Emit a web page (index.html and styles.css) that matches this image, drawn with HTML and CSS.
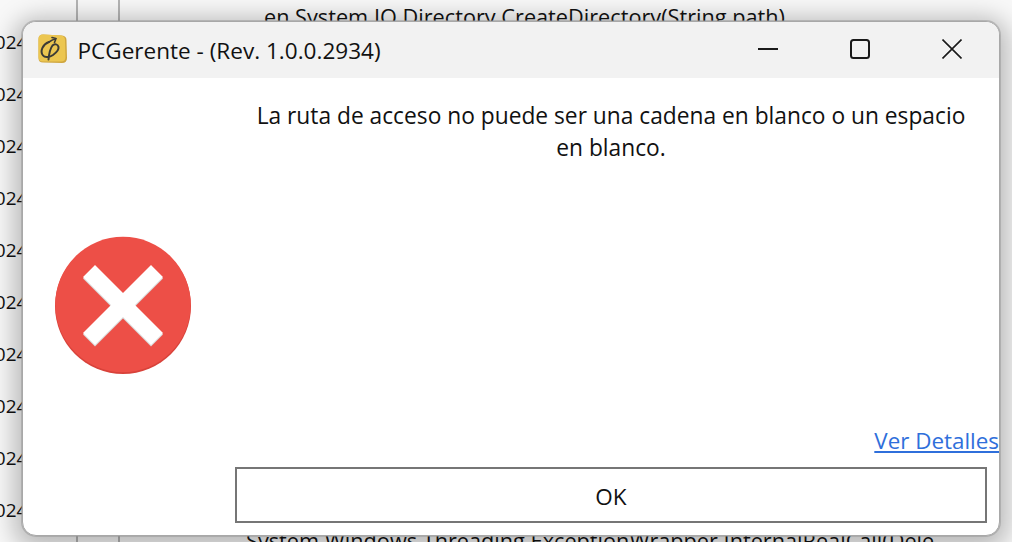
FILE: index.html
```html
<!DOCTYPE html>
<html lang="es">
<head>
<meta charset="utf-8">
<title>PCGerente</title>
<link rel="stylesheet" href="styles.css">
</head>
<body>
<div class="backdrop">
  <div class="col-dates">
    <span>2024</span><span>2024</span><span>2024</span><span>2024</span><span>2024</span><span>2024</span><span>2024</span><span>2024</span><span>2024</span><span>2024</span>
  </div>
  <div class="col-narrow"></div>
  <div class="col-log">
    <div class="log-top">en System.IO.Directory.CreateDirectory(String path)</div>
    <div class="log-bottom">System.Windows.Threading.ExceptionWrapper.InternalRealCall(Dele</div>
  </div>
</div>
<section class="dialog">
  <header class="titlebar">
    <svg class="app-icon" width="29" height="30" viewBox="0 0 29 30">
      <path d="M5 0.500 L24 1.500 Q28.500 2 28.500 6 L29 24 Q29 29 24 29 L5 28.500 Q0.500 28.500 0.500 24 L0.500 5 Q0.500 0.500 5 0.500z" fill="#cfa63f"/>
      <path d="M5 0.500 L23 1.500 Q27 2 27 6 L27.500 23 Q27.500 27.500 23 27.500 L5 27.500 Q0.500 27.500 0.500 23 L0.500 5 Q0.500 0.500 5 0.500z" fill="#ecc650"/>
      <path d="M11 8C5 10 1.500 17 5 21.500c2 2.500 7 1.500 10-.5 3.500-2.500 6-5 5.500-8-.5-3-4-3.500-6-1.500-2 2.500-3.500 9-4 14" fill="none" stroke="#3c3b36" stroke-width="2" stroke-linecap="round"/>
      <path d="M11 8C13 6.500 15 5.500 18 4.500M14 3.500l4 1-1.500 4" fill="none" stroke="#3c3b36" stroke-width="1.600" stroke-linecap="round"/>
    </svg>
    <h1 class="title">PCGerente - (Rev. 1.0.0.2934)</h1>
    <div class="win-controls">
      <svg class="ctl" width="20" height="20" viewBox="0 0 20 20"><path d="M0 10h20" stroke="#1a1a1a" stroke-width="2" fill="none"/></svg>
      <svg class="ctl" width="20" height="20" viewBox="0 0 20 20"><rect x="1" y="1" width="18" height="18" rx="2.500" stroke="#1a1a1a" stroke-width="2" fill="none"/></svg>
      <svg class="ctl" width="20" height="20" viewBox="0 0 20 20"><path d="M0.500 0.500l19 19M19.500 0.500l-19 19" stroke="#1a1a1a" stroke-width="1.600" fill="none"/></svg>
    </div>
  </header>
  <div class="content">
    <div class="icon-pane">
      <svg width="138" height="140" viewBox="0 0 138 140">
        <circle cx="68" cy="70" r="68" fill="#d8423a"/>
        <circle cx="68" cy="68.500" r="67.700" fill="#ed4f47"/>
        <g transform="translate(68 70.500)">
          <polygon points="-28,-40 0,-12 28,-40 40,-28 12,0 40,28 28,40 0,12 -28,40 -40,28 -12,0 -40,-28" fill="#d9d9d9"/>
        </g>
        <g transform="translate(68 69)">
          <polygon points="-28,-40 0,-12 28,-40 40,-28 12,0 40,28 28,40 0,12 -28,40 -40,28 -12,0 -40,-28" fill="#ffffff"/>
        </g>
      </svg>
    </div>
    <div class="main-pane">
      <p class="message">La ruta de acceso no puede ser una cadena en blanco o un espacio en blanco.</p>
      <a class="details" href="#">Ver Detalles</a>
      <button class="ok" type="button">OK</button>
    </div>
  </div>
</section>
</body>
</html>
```
FILE: styles.css
```css
* { box-sizing: border-box; }
html, body { margin: 0; height: 100%; overflow: hidden; }
body {
  width: 1012px;
  height: 542px;
  position: relative;
  font-family: "Open Sans", "Noto Sans", sans-serif;
  color: #111;
  background: #fff;
}
.backdrop {
  display: flex;
  width: 1012px;
  height: 542px;
  background: #f8f8f8;
}
.col-dates {
  flex: none;
  border-right: 2px solid #b4b4b4;
  display: flex;
  flex-direction: column;
  gap: 26px;
  padding-top: 29px;
  margin-left: -16px;
  width: 94px;
  overflow: hidden;
  font-size: 19px;
  line-height: 26px;
}
.col-narrow {
  width: 42px;
  flex: none;
  border-right: 2px solid #b4b4b4;
}
.col-log {
  flex: 1;
  font-size: 21.700px;
  line-height: 26px;
  display: flex;
  flex-direction: column;
  justify-content: space-between;
}
.log-top { margin: 4px 0 0 144px; white-space: nowrap; }
.log-bottom { margin: 0 0 -12px 126px; white-space: nowrap; }
.dialog {
  position: absolute;
  left: 22px;
  top: 21px;
  width: 978px;
  height: 515px;
  background: #fff;
  border: 1px solid #a8a8a8;
  border-radius: 14px;
  overflow: hidden;
  box-shadow: 0 0 0 1px rgba(150, 150, 150, 0.5), 0 5px 24px 8px rgba(0, 0, 0, 0.26);
  display: flex;
  flex-direction: column;
}
.titlebar {
  height: 56px;
  flex: none;
  background: #f2f2f2;
  display: flex;
  align-items: center;
  padding: 0 37px 0 15px;
}
.app-icon { flex: none; margin-bottom: 2px; }
.title {
  margin: 0 0 0 10.500px;
  font-size: 22.550px;
  font-weight: 400;
  flex: 1;
  white-space: nowrap;
}
.win-controls { display: flex; gap: 72px; margin-bottom: 2px; }
.ctl { display: block; }
.content { flex: 1; display: flex; min-height: 0; }
.icon-pane {
  width: 212px;
  flex: none;
  padding: 158px 0 0 32px;
}
.main-pane {
  flex: 1;
  display: flex;
  flex-direction: column;
  align-items: flex-start;
  padding-bottom: 12px;
}
.message {
  margin: 22px 23px 0 11px;
  flex: 1;
  text-align: center;
  font-size: 22.750px;
  line-height: 32px;
}
.details {
  align-self: flex-end;
  color: #2f6fdb;
  font-size: 22.400px;
  line-height: 32px;
  margin-bottom: 10px;
}
.ok {
  height: 56px;
  width: 752px;
  background: #fff;
  border: 2px solid #767676;
  font: inherit;
  font-size: 22.500px;
  color: #111;
  padding: 2px 0 0;
}
```
